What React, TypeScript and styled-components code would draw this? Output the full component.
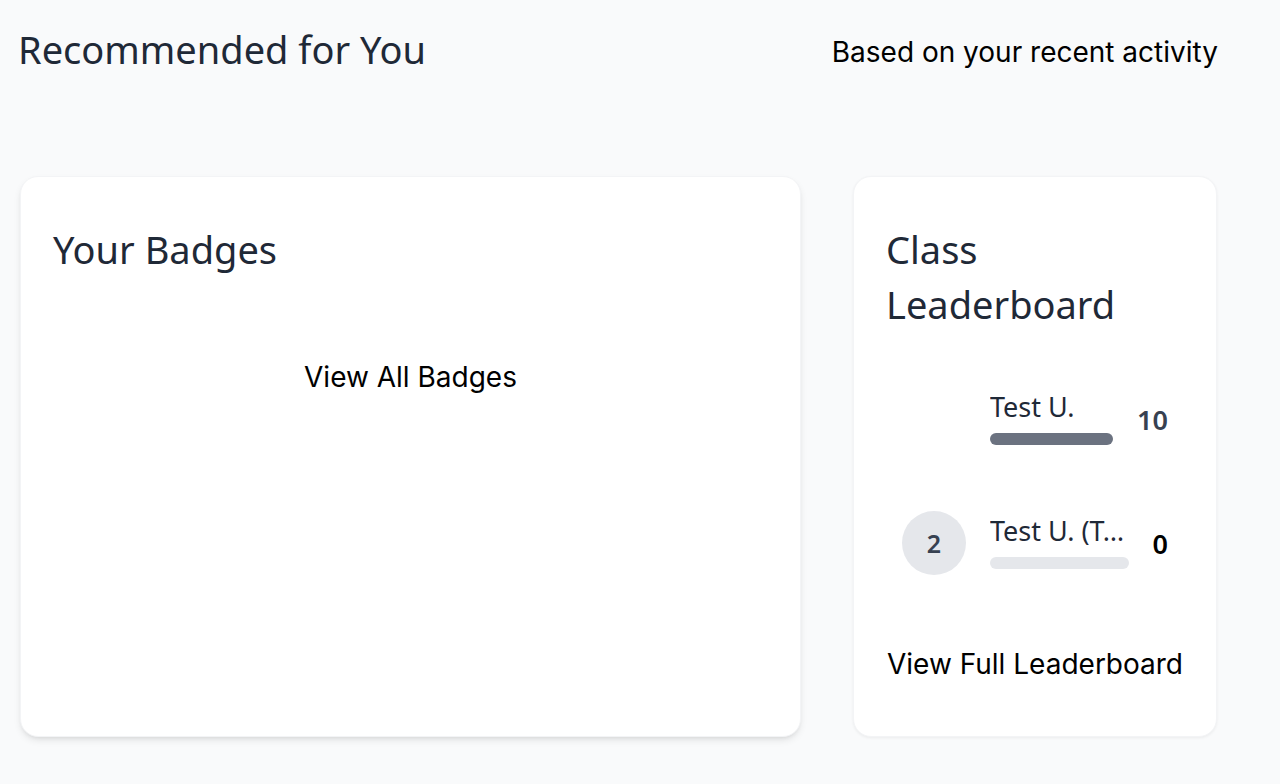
import React from "react";
import styled, { createGlobalStyle } from "styled-components";

const Global = createGlobalStyle`
  html, body { margin: 0; padding: 0; background: #f9fafb; }
  body { font-family: "Noto Sans", sans-serif; -webkit-font-smoothing: antialiased; }
  * { box-sizing: border-box; }
`;

const Page = styled.div`
  width: 1280px;
  height: 784px;
  padding: 0 62px 0 20px;
  background: #f9fafb;
  overflow: hidden;
`;

const Header = styled.header`
  display: flex;
  align-items: flex-start;
  justify-content: space-between;
  height: 176px;
  padding-top: 30px;
`;

const PageTitle = styled.h2`
  margin: 0 0 0 -2px;
  font-family: "Noto Sans", sans-serif;
  font-weight: 400;
  font-size: 38px;
  line-height: 38px;
  color: #1f2937;
`;

const Subtitle = styled.p`
  margin: 6px 0 0;
  font-family: Inter, sans-serif;
  font-size: 28px;
  line-height: 32px;
  color: #000;
`;

const Grid = styled.div`
  display: grid;
  grid-template-columns: 781px 364px;
  column-gap: 52px;
  height: 561px;
`;

const Card = styled.section<{ $strong?: boolean }>`
  background: #fff;
  border-radius: 18px;
  padding: 32px;
  border: 1px solid #f3f4f6;
  box-shadow: ${(p) =>
    p.$strong
      ? "0 4px 8px -2px rgba(0,0,0,0.12), 0 2px 4px -2px rgba(0,0,0,0.08)"
      : "0 1px 3px rgba(0,0,0,0.06)"};
  display: flex;
  flex-direction: column;
`;

const CardTitle = styled.h3`
  margin: 13px 0 0;
  font-family: "Noto Sans", sans-serif;
  font-weight: 400;
  font-size: 38px;
  line-height: 55px;
  color: #1f2937;
`;

const CenterLink = styled.a<{ $top: number }>`
  display: block;
  align-self: center;
  margin-top: ${(p) => p.$top}px;
  font-family: Inter, sans-serif;
  font-size: 28px;
  line-height: 32px;
  color: #000;
  text-decoration: none;
`;

const List = styled.div`
  display: flex;
  flex-direction: column;
  gap: 28px;
  margin-top: 39px;
`;

const Row = styled.div`
  display: flex;
  align-items: center;
  gap: 24px;
  padding: 16px;
`;

const Rank = styled.div<{ $hidden?: boolean }>`
  flex: none;
  width: 64px;
  height: 64px;
  border-radius: 50%;
  background: ${(p) => (p.$hidden ? "transparent" : "#e5e7eb")};
  color: #374151;
  display: flex;
  align-items: center;
  justify-content: center;
  font-family: "Noto Sans", sans-serif;
  font-weight: 600;
  font-size: 25px;
`;

const Info = styled.div`
  flex: 1;
  min-width: 0;
  display: flex;
  flex-direction: column;
  gap: 8px;
`;

const Name = styled.div`
  font-family: "Noto Sans", sans-serif;
  font-size: 27px;
  line-height: 36px;
  color: #1f2937;
  white-space: nowrap;
  overflow: hidden;
  text-overflow: ellipsis;
  margin-top: -4px;
`;

const Bar = styled.div<{ $fill: string }>`
  height: 12px;
  border-radius: 6px;
  background: ${(p) => p.$fill};
`;

const Score = styled.div<{ $color: string }>`
  flex: none;
  font-family: "Noto Sans", sans-serif;
  font-weight: 600;
  font-size: 27px;
  color: ${(p) => p.$color};
`;

const rows = [
  { rank: "", name: "Test U.", score: "10", bar: "#6b7280", scoreColor: "#374151", hidden: true },
  { rank: "2", name: "Test U. (Test User)", score: "0", bar: "#e5e7eb", scoreColor: "#000", hidden: false },
];

export default function App() {
  return (
    <Page>
      <Global />
      <Header>
        <PageTitle>Recommended for You</PageTitle>
        <Subtitle>Based on your recent activity</Subtitle>
      </Header>
      <Grid>
        <Card $strong>
          <CardTitle>Your Badges</CardTitle>
          <CenterLink href="#" $top={84}>View All Badges</CenterLink>
        </Card>
        <Card>
          <CardTitle>Class Leaderboard</CardTitle>
          <List>
            {rows.map((r, i) => (
              <Row key={i}>
                <Rank $hidden={r.hidden}>{r.rank}</Rank>
                <Info>
                  <Name>{r.name}</Name>
                  <Bar $fill={r.bar} />
                </Info>
                <Score $color={r.scoreColor}>{r.score}</Score>
              </Row>
            ))}
          </List>
          <CenterLink href="#" $top={57}>View Full Leaderboard</CenterLink>
        </Card>
      </Grid>
    </Page>
  );
}
